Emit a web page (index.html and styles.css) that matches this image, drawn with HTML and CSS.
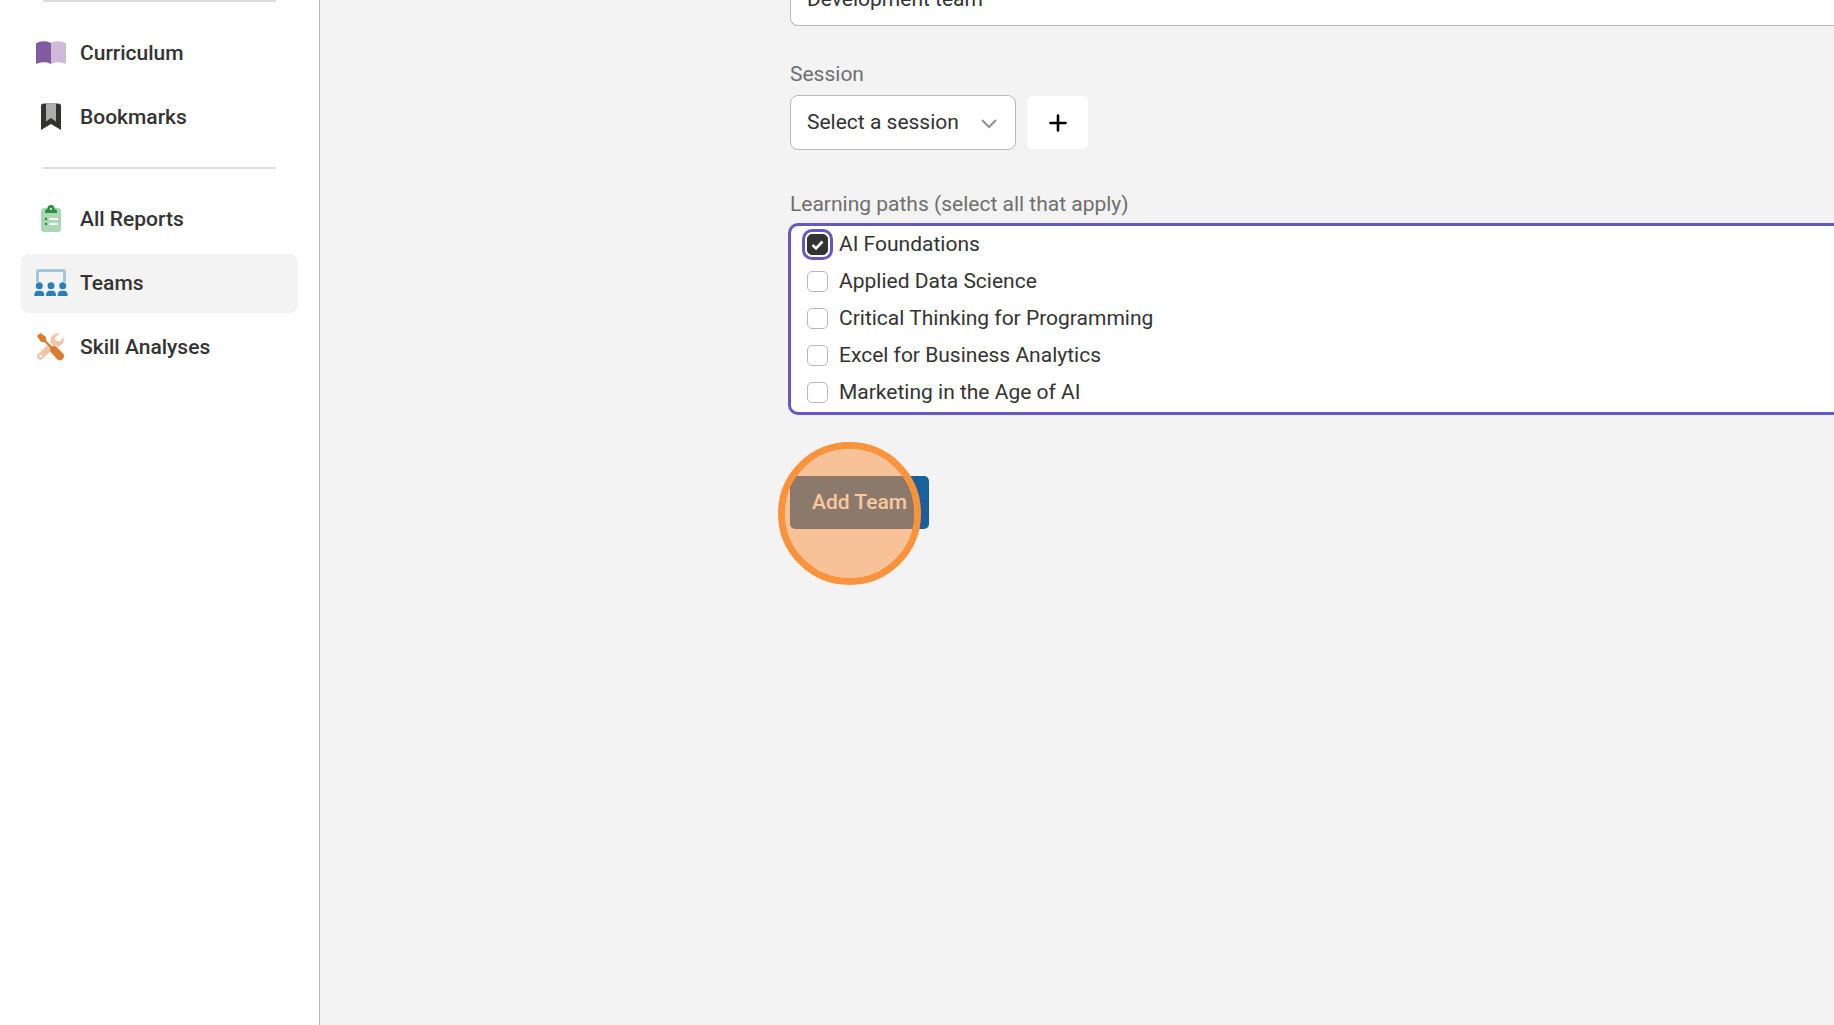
FILE: index.html
```html
<!DOCTYPE html>
<html lang="en">
<head>
    <meta charset="UTF-8">
    <title>Add Team</title>
    <link rel="stylesheet" href="styles.css">
</head>
<body>

    <div class="page">
        <nav class="sidebar">
            <hr class="divider divider-top">
            <ul class="menu">
                <li><a href="#" class="menu-item">
                    <svg class="icon" viewBox="0 0 34 30">
                        <path fill="#825a9f" d="M2 5.500C6 2.500 13 2.500 17 5V26C13 23.500 7 23.500 2 26Z"/>
                        <path fill="#cdbbd9" d="M17 5C21 2.500 28 2.500 32 5.500V26C27 23.500 21 23.500 17 26Z"/>
                    </svg>
                    Curriculum</a></li>
                <li><a href="#" class="menu-item">
                    <svg class="icon" viewBox="0 0 34 30">
                        <path fill="#333231" d="M7 4Q7 1.500 10 1.500H24Q27 1.500 27 4V28L17 22L7 28Z"/>
                        <path fill="#adadad" d="M12 1.500H22V19.500L17 16L12 19.500Z"/>
                    </svg>
                    Bookmarks</a></li>
            </ul>
            <hr class="divider">
            <ul class="menu">
                <li><a href="#" class="menu-item">
                    <svg class="icon" viewBox="0 0 34 30">
                        <rect x="7" y="4" width="20" height="24" rx="3" fill="#a9d8b2"/>
                        <path fill="#2f9147" d="M11 9V7.500Q11 5 13.300 5Q13.500 1 17 1T20.700 5Q23 5 23 7.500V9Z"/>
                        <circle cx="17" cy="5" r="1" fill="#fff"/>
                        <circle cx="12" cy="15" r="1.300" fill="#2f9147"/>
                        <circle cx="12" cy="20" r="1.300" fill="#2f9147"/>
                        <path d="M16 15H23M16 20H23" stroke="#fff" stroke-width="2" stroke-linecap="round"/>
                    </svg>
                    All Reports</a></li>
                <li><a href="#" class="menu-item on">
                    <svg class="icon" viewBox="0 0 34 30">
                        <path d="M3.500 14V4Q3.500 2.500 5 2.500H29Q30.500 2.500 30.500 4V14" fill="none" stroke="#a5c6da" stroke-width="3"/>
                        <g fill="#2b7fb8">
                            <circle cx="5.300" cy="17.800" r="3.500"/>
                            <circle cx="17" cy="17.800" r="3.500"/>
                            <circle cx="28.700" cy="17.800" r="3.500"/>
                            <path d="M0.300 27.500Q0.300 22.800 4 22.800H6.600Q10.300 22.800 10.300 27.500Q10.300 28 9.300 28H1.300Q.3 28 .3 27.500Z"/>
                            <path d="M12 27.500Q12 22.800 15.700 22.800H18.300Q22 22.800 22 27.500Q22 28 21 28H13Q12 28 12 27.500Z"/>
                            <path d="M23.700 27.500Q23.700 22.800 27.400 22.800H30Q33.700 22.800 33.700 27.500Q33.700 28 32.700 28H24.700Q23.700 28 23.700 27.500Z"/>
                        </g>
                    </svg>
                    Teams</a></li>
                <li><a href="#" class="menu-item">
                    <svg class="icon" viewBox="0 0 34 30">
                        <path d="M6.500 24.500L15 16" stroke="#f0c5a7" stroke-width="6.500" stroke-linecap="round"/>
                        <path fill="#f0c5a7" d="M25.500 1.500C20 .5 15 5.500 16.500 10.500L20.500 14.500C26 16 31 11 29.500 5.500L25.500 9.500L21.500 8.500L21 5.500Z"/>
                        <circle cx="6.800" cy="24.300" r="1.300" fill="#fff"/>
                        <path fill="#db7a31" d="M3 4L6.500 1L12 5V8.500L18 14.500Q20.500 13 23 15.500L29.500 22Q31 24 29.500 26L27.500 28Q25.500 29 23.500 27.500L17.500 21Q15 18.500 16.500 16L10.500 10H7Z"/>
                    </svg>
                    Skill Analyses</a></li>
            </ul>
        </nav>

        <main class="content">
            <form class="team-form">
                <div class="name-row">
                    <input class="text-input" type="text" value="Development team" aria-label="Team name">
                </div>

                <label class="label" for="session">Session</label>
                <div class="session-row">
                    <div class="select-box">
                        <select id="session">
                            <option>Select a session</option>
                        </select>
                        <svg class="arrow" viewBox="0 0 16 10">
                            <path d="M1 1L8 8L15 1" fill="none" stroke="#919191" stroke-width="2"/>
                        </svg>
                    </div>
                    <button class="add-session" type="button" aria-label="Add session">
                        <svg viewBox="0 0 18 18">
                            <path d="M9 1.500V16.500M1.500 9H16.500" stroke="#000" stroke-width="2.600" stroke-linecap="round"/>
                        </svg>
                    </button>
                </div>

                <div class="label" id="paths-label">Learning paths (select all that apply)</div>
                <div class="paths" role="group" aria-labelledby="paths-label">
                    <label class="path"><input class="focus" type="checkbox" checked>AI Foundations</label>
                    <label class="path"><input type="checkbox">Applied Data Science</label>
                    <label class="path"><input type="checkbox">Critical Thinking for Programming</label>
                    <label class="path"><input type="checkbox">Excel for Business Analytics</label>
                    <label class="path"><input type="checkbox">Marketing in the Age of AI</label>
                </div>

                <div class="submit-row">
                    <button class="submit" type="button">Add Team</button>
                    <span class="click-mark"></span>
                </div>
            </form>
        </main>
    </div>

</body>
</html>
```

FILE: styles.css
```css
*{
    margin: 0;
    padding: 0;
    box-sizing: border-box;
}

body{
    background: #f3f3f3;
    color: #333;
    font-family: Roboto, "Liberation Sans", sans-serif;
    font-size: 21px;
    line-height: 27px;
}

input, select, button{
    color: inherit;
    font: inherit;
}

ul{
    list-style: none;
}

.page{
    display: flex;
    min-height: 100vh;
}

/* sidebar */
.sidebar{
    flex: none;
    width: 320px;
    padding: 0 21px;
    border-right: 1px solid #b8b8b8;
    background: #fff;
}

.divider{
    height: 2px;
    margin: 20px 22px 21px;
    border: 0;
    background: #ddd;
}

.divider-top{
    margin: 0 22px 22px;
}

.menu{
    display: flex;
    flex-direction: column;
    gap: 5px;
}

.menu-item{
    display: flex;
    align-items: center;
    gap: 12px;
    height: 59px;
    padding-left: 13px;
    border-radius: 8px;
    color: #333;
    font-weight: 500;
    text-decoration: none;
}

.menu-item.on{
    background: #f3f3f3;
}

.icon{
    width: 34px;
    height: 30px;
    margin-bottom: 2px;
}

/* form */
.content{
    flex: 1;
    padding-left: 470px;
}

/* only the lower half of the name field is scrolled into view */
.name-row{
    display: flex;
    align-items: flex-end;
    height: 26px;
    margin-bottom: 35px;
    overflow: hidden;
}

.text-input{
    flex: 1;
    height: 55px;
    padding: 0 16px;
    border: 1px solid #b8b8b8;
    border-right: 0;
    border-radius: 8px 0 0 8px;
    background: #fff;
}

.label{
    display: block;
    margin-bottom: 7px;
    color: #706e6e;
}

.session-row{
    display: flex;
    align-items: center;
    gap: 11px;
    margin-bottom: 41px;
}

.select-box{
    position: relative;
}

.select-box select{
    width: 226px;
    height: 55px;
    padding: 0 16px;
    border: 1px solid #b8b8b8;
    border-radius: 8px;
    background: #fff;
    appearance: none;
}

.arrow{
    position: absolute;
    top: 24px;
    right: 19px;
    width: 16px;
    height: 10px;
    pointer-events: none;
}

.add-session{
    display: flex;
    align-items: center;
    justify-content: center;
    width: 61px;
    height: 53px;
    border: 0;
    border-radius: 5px;
    background: #fff;
}

.add-session svg{
    width: 18px;
    height: 18px;
}

.paths{
    margin: -2px 0 0 -2px;
    padding: 0 0 1px 16px;
    border: 3px solid #6459c0;
    border-right: 0;
    border-radius: 10px 0 0 10px;
    background: #fff;
}

.path{
    display: flex;
    align-items: center;
    gap: 11px;
    height: 37px;
}

.path input{
    width: 21px;
    height: 21px;
    border: 1px solid #b8b8b8;
    border-radius: 5px;
    background: #fff;
    appearance: none;
}

.path input:checked{
    border-color: #333;
    background: #333 url("data:image/svg+xml,%3Csvg xmlns='http://www.w3.org/2000/svg' viewBox='0 0 21 21'%3E%3Cpath d='M5.500 11L9 14.500L15.500 7.500' fill='none' stroke='white' stroke-width='2.600'/%3E%3C/svg%3E") center / 21px 21px;
}

.path .focus{
    outline: 3px solid #6459c0;
    outline-offset: 2px;
}

.submit-row{
    position: relative;
    margin-top: 61px;
}

.submit{
    height: 53px;
    padding: 0 22px;
    border: 0;
    border-radius: 5px;
    background: #1a619c;
    color: #fff;
    font-weight: 500;
}

.click-mark{
    position: absolute;
    top: -34px;
    left: -12px;
    width: 143px;
    height: 143px;
    border: 7px solid #fb923c;
    border-radius: 50%;
    background: rgba(251, 146, 60, .5);
    background-clip: padding-box;
    pointer-events: none;
}
```
